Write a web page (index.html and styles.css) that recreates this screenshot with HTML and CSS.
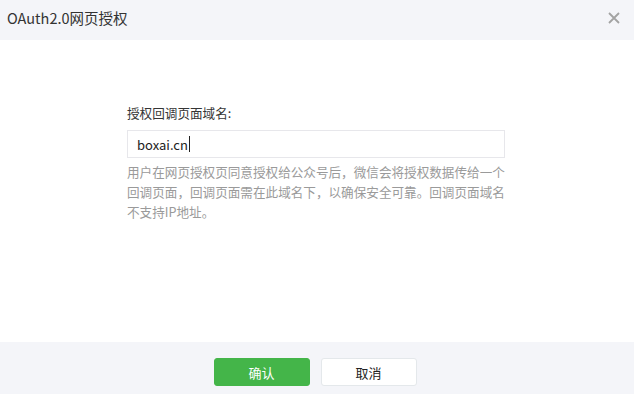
FILE: index.html
```html
<!DOCTYPE html>
<html lang="zh-CN">
<head>
<meta charset="utf-8">
<title>OAuth2.0网页授权</title>
<link rel="stylesheet" href="styles.css">
</head>
<body>
<div class="dialog">
  <div class="dialog-hd">
    <h3 class="dialog-title">OAuth2.0网页授权</h3>
    <span class="dialog-close" aria-label="关闭">
      <svg width="12" height="12" viewBox="0 0 12 12"><path d="M1 1L11 11M11 1L1 11" stroke="#a3a3a3" stroke-width="1.8" fill="none"/></svg>
    </span>
  </div>
  <div class="dialog-bd">
    <div class="form">
      <label class="form-label">授权回调页面域名:</label>
      <div class="input-box"><span class="input-text">boxai.cn</span><span class="caret"></span></div>
      <p class="form-tips">用户在网页授权页同意授权给公众号后，微信会将授权数据传给一个回调页面，回调页面需在此域名下，以确保安全可靠。回调页面域名不支持IP地址。</p>
    </div>
  </div>
  <div class="dialog-ft">
    <a class="btn btn-primary">确认</a>
    <a class="btn btn-default">取消</a>
  </div>
</div>
</body>
</html>
```
FILE: styles.css
```css
html, body {
  margin: 0;
  padding: 0;
  background: #fff;
}
body {
  font-family: "Noto Sans CJK SC", "Noto Sans", sans-serif;
  color: #353535;
}
.dialog {
  width: 634px;
  height: 394px;
  display: flex;
  flex-direction: column;
}
.dialog-hd {
  height: 40px;
  background: #f4f5f9;
  display: flex;
  align-items: center;
  justify-content: space-between;
  padding: 0 14px 0 7px;
}
.dialog-title {
  margin: 0;
  font-weight: normal;
  font-size: 14.5px;
  color: #333;
  line-height: 20px;
  margin-top: -5px;
}
.dialog-close {
  display: flex;
  width: 12px;
  height: 12px;
  margin-top: -5px;
}
.dialog-bd {
  flex: 1;
  padding: 63px 0 0 127px;
}
.form {
  width: 378px;
  display: flex;
  flex-direction: column;
}
.form-label {
  font-size: 12.6px;
  line-height: 20px;
  color: #353535;
}
.input-box {
  margin-top: 7px;
  height: 28px;
  box-sizing: border-box;
  border: 1px solid #e7e7eb;
  display: flex;
  align-items: center;
  padding-left: 9px;
}
.input-text {
  font-size: 13px;
  color: #222;
}
.caret {
  width: 1px;
  height: 16px;
  background: #222;
  margin-left: 1px;
}
.form-tips {
  margin: 4px 0 0;
  font-size: 12.6px;
  line-height: 20px;
  color: #9a9a9a;
}
.dialog-ft {
  height: 52px;
  background: #f4f5f9;
  display: flex;
  justify-content: center;
  align-items: flex-start;
  gap: 11px;
  padding: 16px 4px 0 0;
  box-sizing: border-box;
}
.btn {
  width: 96px;
  height: 28px;
  box-sizing: border-box;
  border-radius: 3px;
  display: flex;
  align-items: center;
  justify-content: center;
  font-size: 13px;
}
.btn-primary {
  background: #44b549;
  color: #fff;
  border: 1px solid #44b549;
}
.btn-default {
  background: #fff;
  color: #222;
  border: 1px solid #e4e8eb;
}
```
